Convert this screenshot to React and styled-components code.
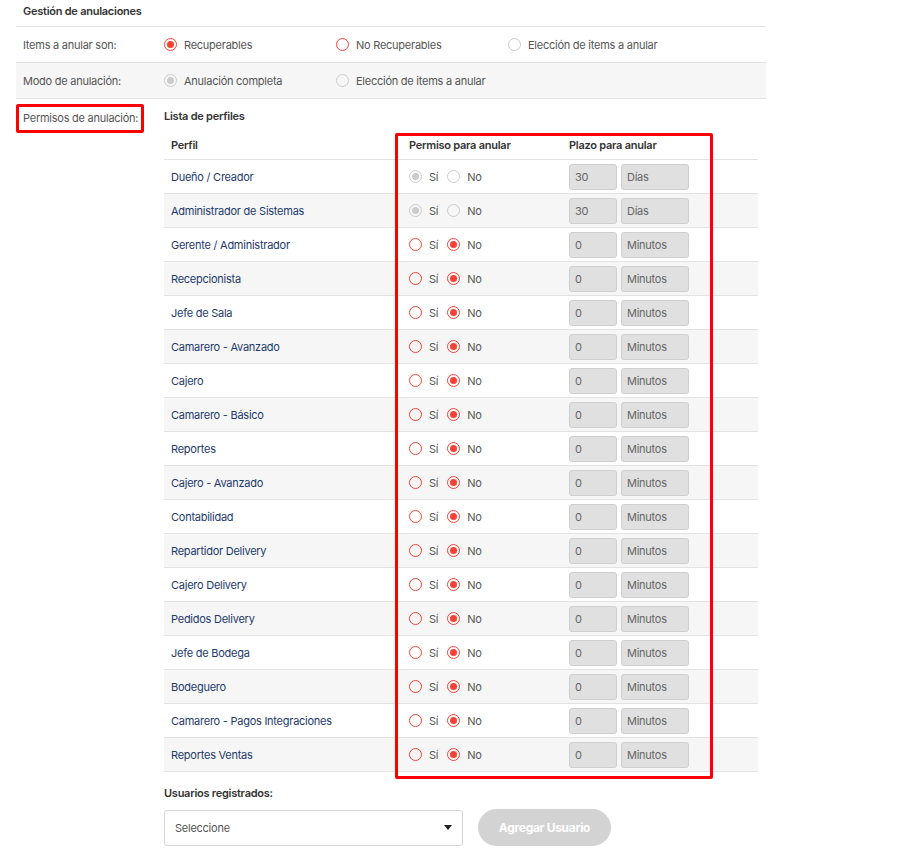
import React from 'react';
import styled, { createGlobalStyle } from 'styled-components';

const Global = createGlobalStyle`
  body { margin: 0; background: #fff; font-family: Inter, "Noto Sans", sans-serif; font-size: 11px; letter-spacing: -0.25px; color: #555; }
`;

const Page = styled.div`
  width: 750px;
  margin-left: 16px;
`;

const Title = styled.div`
  font-weight: 600;
  color: #333;
  padding: 4px 7px 8px;
`;

const FormRow = styled.div`
  display: grid;
  grid-template-columns: 148px 172px 172px 1fr;
  align-items: center;
  height: 36px;
  box-sizing: border-box;
  border-top: 1px solid #e3e3e3;
  background: ${p => (p.$grey ? '#f6f6f6' : '#fff')};
`;

const RowLabel = styled.span`
  color: #555;
  padding-left: 7px;
`;

const Opt = styled.label`
  display: flex;
  align-items: center;
  gap: 7px;
  color: #555;
`;

const Radio = styled.span`
  width: 11px;
  height: 11px;
  border-radius: 50%;
  border: 1px solid ${p => (p.$disabled ? '#ccc' : '#f44336')};
  display: inline-flex;
  align-items: center;
  justify-content: center;
  flex: none;
  &::after {
    content: '';
    display: ${p => (p.$on ? 'block' : 'none')};
    width: 7px;
    height: 7px;
    border-radius: 50%;
    background: ${p => (p.$disabled ? '#ccc' : '#f44336')};
  }
`;

const Permisos = styled.div`
  display: grid;
  grid-template-columns: 148px 594px;
  border-top: 1px solid #e3e3e3;
  padding-top: 5px;
`;

const PermLabel = styled.div`
  align-self: start;
  width: fit-content;
  padding: 5px 3px 6px 4px;
  border: 3px solid #f00;
  border-radius: 2px;
  color: #555;
  line-height: 12px;
`;

const Side = styled.div``;

const SubTitle = styled.div`
  font-weight: 600;
  color: #333;
  padding: 6px 0 8px;
  line-height: 13px;
`;

const TableWrap = styled.div`
  position: relative;
`;

const Grid = styled.div`
  display: grid;
  grid-template-columns: 238px 160px 196px;
  align-items: center;
  height: ${p => (p.$head ? '29px' : '34px')};
  box-sizing: border-box;
  border-bottom: 1px solid #e3e3e3;
  background: ${p => (p.$grey ? '#f6f6f6' : '#fff')};
  & > * { padding-left: 7px; }
`;

const Head = styled.span`
  font-weight: 600;
  color: #333;
`;

const Name = styled.span`
  color: #1d3a6b;
`;

const Choice = styled.div`
  display: flex;
  align-items: center;
  gap: 7px;
  & > span.t { margin-right: 2px; color: #555; }
`;

const Inputs = styled.div`
  display: flex;
  gap: 4px;
`;

const Box = styled.div`
  width: ${p => p.$w}px;
  height: 26px;
  box-sizing: border-box;
  background: #e0e0e0;
  border: 1px solid #cfcfcf;
  border-radius: 3px;
  display: flex;
  align-items: center;
  padding-left: 5px;
  color: #666;
`;

const Highlight = styled.div`
  position: absolute;
  left: 231px;
  top: 2px;
  width: 318px;
  height: 646px;
  box-sizing: border-box;
  border: 3px solid #f00;
  border-radius: 2px;
  pointer-events: none;
`;

const UsersLabel = styled.div`
  font-weight: 600;
  color: #333;
  margin: 14px 0 9px;
`;

const Bottom = styled.div`
  display: flex;
  align-items: center;
  gap: 15px;
`;

const Select = styled.div`
  width: 299px;
  height: 36px;
  box-sizing: border-box;
  border: 1px solid #d6d6d6;
  border-radius: 3px;
  display: flex;
  align-items: center;
  justify-content: space-between;
  padding: 0 10px;
  color: #555;
`;

const Caret = styled.span`
  width: 0;
  height: 0;
  border-left: 4px solid transparent;
  border-right: 4px solid transparent;
  border-top: 5px solid #222;
`;

const Button = styled.button`
  width: 133px;
  height: 37px;
  border: none;
  border-radius: 19px;
  background: #d3d3d3;
  color: #fff;
  font-family: inherit;
  font-weight: 700;
  font-size: 12px;
  letter-spacing: -0.3px;
`;

const profiles = [
  'Dueño / Creador', 'Administrador de Sistemas', 'Gerente / Administrador', 'Recepcionista',
  'Jefe de Sala', 'Camarero - Avanzado', 'Cajero', 'Camarero - Básico', 'Reportes',
  'Cajero - Avanzado', 'Contabilidad', 'Repartidor Delivery', 'Cajero Delivery',
  'Pedidos Delivery', 'Jefe de Bodega', 'Bodeguero', 'Camarero - Pagos Integraciones', 'Reportes Ventas',
];

export default function App() {
  return (
    <Page>
      <Global />
      <Title>Gestión de anulaciones</Title>
      <FormRow>
        <RowLabel>Items a anular son:</RowLabel>
        <Opt><Radio $on />Recuperables</Opt>
        <Opt><Radio />No Recuperables</Opt>
        <Opt><Radio $disabled />Elección de items a anular</Opt>
      </FormRow>
      <FormRow $grey>
        <RowLabel>Modo de anulación:</RowLabel>
        <Opt><Radio $on $disabled />Anulación completa</Opt>
        <Opt><Radio $disabled />Elección de items a anular</Opt>
      </FormRow>
      <Permisos>
        <PermLabel>Permisos de anulación:</PermLabel>
        <Side>
          <SubTitle>Lista de perfiles</SubTitle>
          <TableWrap>
            <Grid $head>
              <Head>Perfil</Head>
              <Head>Permiso para anular</Head>
              <Head>Plazo para anular</Head>
            </Grid>
            {profiles.map((p, i) => {
              const fixed = i < 2;
              return (
                <Grid key={p} $grey={i % 2 === 1}>
                  <Name>{p}</Name>
                  <Choice>
                    <Radio $on={fixed} $disabled={fixed} />
                    <span className="t">Sí</span>
                    <Radio $on={!fixed} $disabled={fixed} />
                    <span className="t">No</span>
                  </Choice>
                  <Inputs>
                    <Box $w={48}>{fixed ? '30' : '0'}</Box>
                    <Box $w={68}>{fixed ? 'Días' : 'Minutos'}</Box>
                  </Inputs>
                </Grid>
              );
            })}
            <Highlight />
          </TableWrap>
          <UsersLabel>Usuarios registrados:</UsersLabel>
          <Bottom>
            <Select>Seleccione<Caret /></Select>
            <Button>Agregar Usuario</Button>
          </Bottom>
        </Side>
      </Permisos>
    </Page>
  );
}
